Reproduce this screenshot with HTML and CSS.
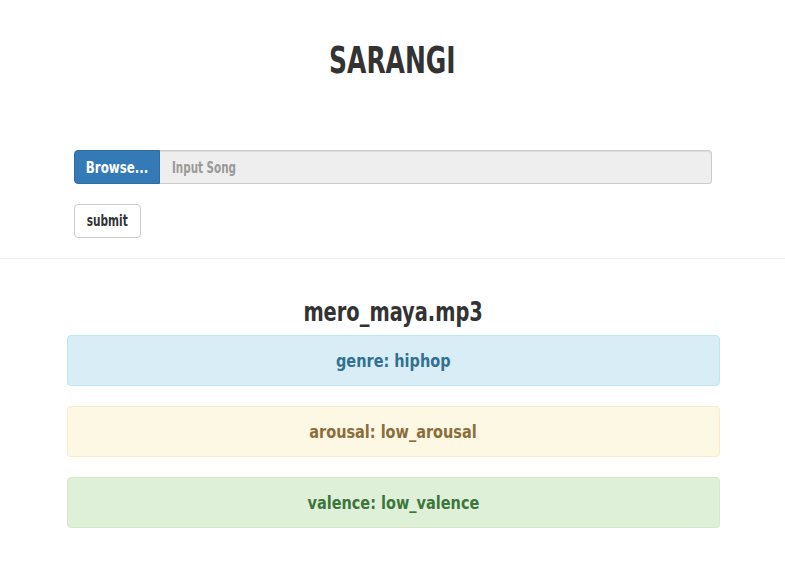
FILE: index.html
```html
<!DOCTYPE html>
<html>
<head>
<meta charset="utf-8">
<link rel="stylesheet" href="styles.css">
</head>
<body>
<header class="masthead">
  <h1 class="brand"><span class="nx nx-brand">SARANGI</span></h1>
</header>
<section class="upload">
  <div class="input-group">
    <span class="btn-browse"><span class="nx nx-browse">Browse...</span></span>
    <div class="file-name"><span class="nx nx-input">Input Song</span></div>
  </div>
  <button class="btn-submit" type="button"><span class="nx nx-submit">submit</span></button>
</section>
<hr class="divider">
<section class="results">
  <h2 class="song"><span class="nx nx-song">mero_maya.mp3</span></h2>
  <div class="alert alert-info"><span class="nx nx-alert">genre: hiphop</span></div>
  <div class="alert alert-warning"><span class="nx nx-alert">arousal: low_arousal</span></div>
  <div class="alert alert-success"><span class="nx nx-alert">valence: low_valence</span></div>
</section>
</body>
</html>
```
FILE: styles.css
```css
* { box-sizing: border-box; }
html, body { margin: 0; padding: 0; background: #fff; }
body {
  font-family: "DejaVu Sans", "Liberation Sans", sans-serif;
  font-stretch: condensed;
  font-weight: 700;
  color: #333;
  font-size: 14px;
}
.nx { display: inline-block; white-space: nowrap; }
.nx-brand { transform: scaleX(0.75); }
.nx-browse { transform: scaleX(0.82); }
.nx-input { transform: scaleX(0.72); transform-origin: left center; }
.nx-submit { transform: scaleX(0.78); }
.nx-song { transform: scaleX(0.83); }
.nx-alert { transform: scaleX(0.92); }

.masthead { padding-top: 36px; text-align: center; }
.brand {
  margin: 0;
  font-size: 37px;
  line-height: 50px;
  color: #333;
}
.upload { padding: 64px 0 0 74px; width: 712px; }
.input-group { display: flex; height: 34px; }
.btn-browse {
  display: flex; align-items: center; justify-content: center;
  width: 86px;
  background: #337ab7;
  border: 1px solid #2e6da4;
  color: #fff;
  border-radius: 4px 0 0 4px;
  font-size: 16px;
}
.file-name {
  flex: 1;
  display: flex; align-items: center;
  height: 34px;
  border: 1px solid #ccc;
  border-left: 0;
  border-radius: 0 4px 4px 0;
  background: #eee;
  padding: 0 12px;
  font-size: 16px;
  color: #999;
  box-shadow: inset 0 1px 1px rgba(0,0,0,.075);
}
.btn-submit {
  display: flex; align-items: center; justify-content: center;
  margin-top: 20px;
  height: 34px;
  width: 67px;
  padding: 0;
  background: #fff;
  border: 1px solid #ccc;
  border-radius: 4px;
  font-family: inherit;
  font-stretch: condensed;
  font-weight: 700;
  font-size: 15px;
  color: #333;
}
.divider { margin: 20px 0 0; border: 0; border-top: 1px solid #eee; }
.results { width: 653px; margin: 0 0 0 67px; padding-top: 37px; }
.song {
  margin: 0 0 7px;
  text-align: center;
  font-size: 26px;
  line-height: 32px;
  color: #333;
}
.alert {
  height: 51px;
  border: 1px solid transparent;
  border-radius: 4px;
  margin-bottom: 20px;
  display: flex; align-items: center; justify-content: center;
  font-size: 17.5px;
}
.alert-info { background: #d9edf7; border-color: #bce8f1; color: #31708f; }
.alert-warning { background: #fcf8e3; border-color: #faebcc; color: #8a6d3b; }
.alert-success { background: #dff0d8; border-color: #d6e9c6; color: #3c763d; }
```
